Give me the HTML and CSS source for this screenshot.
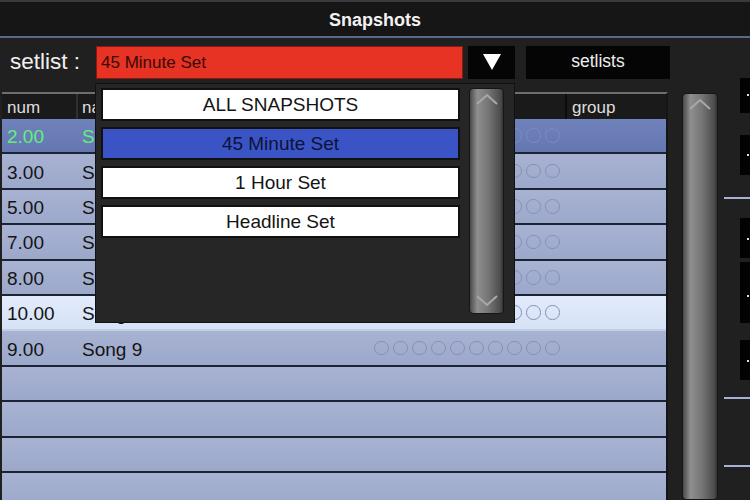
FILE: index.html
```html
<!DOCTYPE html>
<html lang="en">
<head>
    <meta charset="UTF-8">
    <meta name="viewport" content="width=device-width, initial-scale=1.0">
    <title>Snapshots</title>
    <link rel="stylesheet" href="styles.css">
</head>
<body>
    <div class="titlebar">Snapshots</div>
    <div class="rule"></div>

    <div class="setlist-row">
        <div class="setlist-label">setlist :</div>
        <div class="setlist-current">45 Minute Set</div>
        <div class="setlist-arrow">
            <svg width="18" height="16" viewBox="0 0 18 16"><polygon points="0,0 18,0 9,16" fill="#fff"/></svg>
        </div>
        <div class="setlists-btn">setlists</div>
    </div>

    <div class="main">
        <div class="table">
            <div class="thead">
                <div class="col-num">num</div>
                <div class="col-name">name</div>
                <div class="col-group">group</div>
            </div>
            <div class="row selected"><div class="col-num">2.00</div><div class="col-name">Song 2</div><div class="dots"><i></i><i></i><i></i><i></i><i></i><i></i><i></i><i></i><i></i><i></i></div></div>
            <div class="row"><div class="col-num">3.00</div><div class="col-name">Song 3</div><div class="dots"><i></i><i></i><i></i><i></i><i></i><i></i><i></i><i></i><i></i><i></i></div></div>
            <div class="row"><div class="col-num">5.00</div><div class="col-name">Song 5</div><div class="dots"><i></i><i></i><i></i><i></i><i></i><i></i><i></i><i></i><i></i><i></i></div></div>
            <div class="row"><div class="col-num">7.00</div><div class="col-name">Song 7</div><div class="dots"><i></i><i></i><i></i><i></i><i></i><i></i><i></i><i></i><i></i><i></i></div></div>
            <div class="row"><div class="col-num">8.00</div><div class="col-name">Song 8</div><div class="dots"><i></i><i></i><i></i><i></i><i></i><i></i><i></i><i></i><i></i><i></i></div></div>
            <div class="row current"><div class="col-num">10.00</div><div class="col-name">Song 10</div><div class="dots"><i></i><i></i><i></i><i></i><i></i><i></i><i></i><i></i><i></i><i></i></div></div>
            <div class="row"><div class="col-num">9.00</div><div class="col-name">Song 9</div><div class="dots"><i></i><i></i><i></i><i></i><i></i><i></i><i></i><i></i><i></i><i></i></div></div>
            <div class="row"></div>
            <div class="row"></div>
            <div class="row"></div>
            <div class="row"></div>
        </div>

        <div class="scrollbar big">
            <svg class="chev-up" width="24" height="12" viewBox="0 0 24 12"><polyline points="2,11 12,2 22,11" fill="none" stroke="#a8a8a8" stroke-width="2"/></svg>
        </div>

        <div class="side">
            <div class="side-box b1"><span></span></div>
            <div class="side-box b2"><span></span></div>
            <div class="side-line l1"></div>
            <div class="side-box b3"><span></span></div>
            <div class="side-box b4"><span></span></div>
            <div class="side-box b5"><span></span></div>
            <div class="side-line l2"></div>
            <div class="side-line l3"></div>
        </div>
    </div>

    <!-- open setlist dropdown -->
    <div class="dropdown">
        <div class="dropdown-list">
            <div class="dropdown-item">ALL SNAPSHOTS</div>
            <div class="dropdown-item active">45 Minute Set</div>
            <div class="dropdown-item">1 Hour Set</div>
            <div class="dropdown-item">Headline Set</div>
        </div>
        <div class="scrollbar small">
            <svg class="chev-up" width="24" height="12" viewBox="0 0 24 12"><polyline points="2,11 12,2 22,11" fill="none" stroke="#a8a8a8" stroke-width="2"/></svg>
            <svg class="chev-down" width="24" height="12" viewBox="0 0 24 12"><polyline points="2,1 12,10 22,1" fill="none" stroke="#a8a8a8" stroke-width="2"/></svg>
        </div>
    </div>
</body>
</html>
```

FILE: styles.css
```css
* {
    margin: 0;
    padding: 0;
    box-sizing: border-box;
    font-family: 'Liberation Sans', Arial, sans-serif;
}

body {
    width: 750px;
    height: 500px;
    overflow: hidden;
    background: #202020;
    position: relative;
}

.titlebar {
    height: 36px;
    background: #161616;
    border-top: 2px solid #3a3a3a;
    color: #f2f2f2;
    font-weight: bold;
    font-size: 18px;
    text-align: center;
    padding-top: 3px;
    line-height: 31px;
}

.rule {
    height: 2px;
    background: #5c6a8a;
}

.setlist-row {
    display: flex;
    align-items: center;
    height: 54px;
    padding-bottom: 6px;
}

.setlist-label {
    width: 96px;
    padding-left: 10px;
    color: #f0f0f0;
    font-size: 22.5px;
}

.setlist-current {
    width: 367px;
    height: 33px;
    background: #e63323;
    border: 1px solid #8a1a10;
    color: #3a0806;
    font-size: 17px;
    line-height: 31px;
    padding-left: 4px;
}

.setlist-arrow {
    width: 47px;
    height: 33px;
    margin-left: 5px;
    background: #050505;
    display: flex;
    align-items: center;
    justify-content: center;
}

.setlists-btn {
    width: 144px;
    height: 33px;
    margin-left: 11px;
    background: #050505;
    color: #eee;
    font-size: 17.5px;
    text-align: center;
    line-height: 31px;
}

.main {
    display: flex;
    height: 408px;
}

.table {
    width: 666px;
    margin-left: 2px;
    border-top: 2px solid #6e6e6e;
    border-right: 2px solid #151515;
    background: #9fabcd;
}

.thead {
    display: flex;
    height: 25px;
    background: #1a1a1a;
    color: #dedede;
    font-size: 17px;
    line-height: 28px;
}

.thead .col-num {
    border-right: 2px solid #303030;
}

.thead .col-name {
    width: 487px;
    overflow: hidden;
    white-space: nowrap;
}

.col-group {
    border-left: 2px solid #0c0c0c;
    padding-left: 5px;
    flex: 1;
}

.col-num {
    width: 76px;
    padding-left: 5px;
}

.col-name {
    width: 296px;
    padding-left: 4px;
}

.row {
    display: flex;
    align-items: center;
    height: 35.4px;
    padding-top: 3px;
    background: linear-gradient(#a8b3d3, #9ca8ca);
    border-bottom: 2px solid #1c2434;
    color: #141414;
    font-size: 19px;
}

.row .dots {
    margin-top: -3px;
}

.row.selected {
    background: linear-gradient(#7082bb, #6577b0);
    color: #62ef7c;
}

.row.current {
    background: linear-gradient(#e2ebfb, #d6e2f6);
    border-bottom-color: #c3cde3;
}

.dots {
    display: flex;
    gap: 4.5px;
}

.dots i {
    width: 14.5px;
    height: 14.5px;
    border: 1.6px solid #8690b6;
    border-radius: 50%;
}

.row.selected .dots i {
    border-color: #7e8cbc;
}

.scrollbar {
    position: relative;
    background: linear-gradient(to right, #4a4a4a, #8e8e8e 22%, #767676 55%, #4c4c4c 92%, #333);
    border: 1px solid #161616;
    border-radius: 4px;
}

.scrollbar.big {
    width: 36px;
    margin-left: 14px;
    margin-top: 1px;
}

.chev-up {
    position: absolute;
    top: 4px;
    left: 5px;
}

.chev-down {
    position: absolute;
    bottom: 6px;
    left: 5px;
}

.side {
    flex: 1;
    margin-left: 5px;
    position: relative;
}

.side-box {
    position: absolute;
    left: 17px;
    right: 0;
    background: #030303;
}

.side-box span {
    position: absolute;
    right: 1px;
    width: 2px;
    height: 2px;
    background: #ddd;
}

.b1 { top: -14px; height: 35px; }
.b1 span { top: 16px; }
.b2 { top: 43px; height: 40px; }
.b2 span { top: 19px; }
.b3 { top: 126px; height: 40px; }
.b3 span { top: 20px; }
.b4 { top: 170px; height: 61px; }
.b4 span { top: 33px; }
.b5 { top: 248px; height: 40px; }
.b5 span { top: 20px; }

.side-line {
    position: absolute;
    left: 1px;
    right: 0;
    height: 2px;
    background: #a7b1d8;
}

.l1 { top: 105px; }
.l2 { top: 305px; }
.l3 { top: 373px; }

.dropdown {
    position: absolute;
    left: 95px;
    top: 83px;
    width: 420px;
    height: 240px;
    background: #262626;
    border: 1px solid #111;
    display: flex;
    padding: 4px 0 0 5px;
}

.dropdown-list {
    width: 359px;
}

.dropdown-item {
    height: 33px;
    margin-bottom: 6px;
    background: #fff;
    border: 2px solid #111;
    color: #141414;
    font-size: 19px;
    text-align: center;
    line-height: 30px;
}

.dropdown-item.active {
    background: #3a54c6;
    color: #0e1236;
}

.scrollbar.small {
    width: 35px;
    height: 226px;
    margin-left: 9px;
}
```
